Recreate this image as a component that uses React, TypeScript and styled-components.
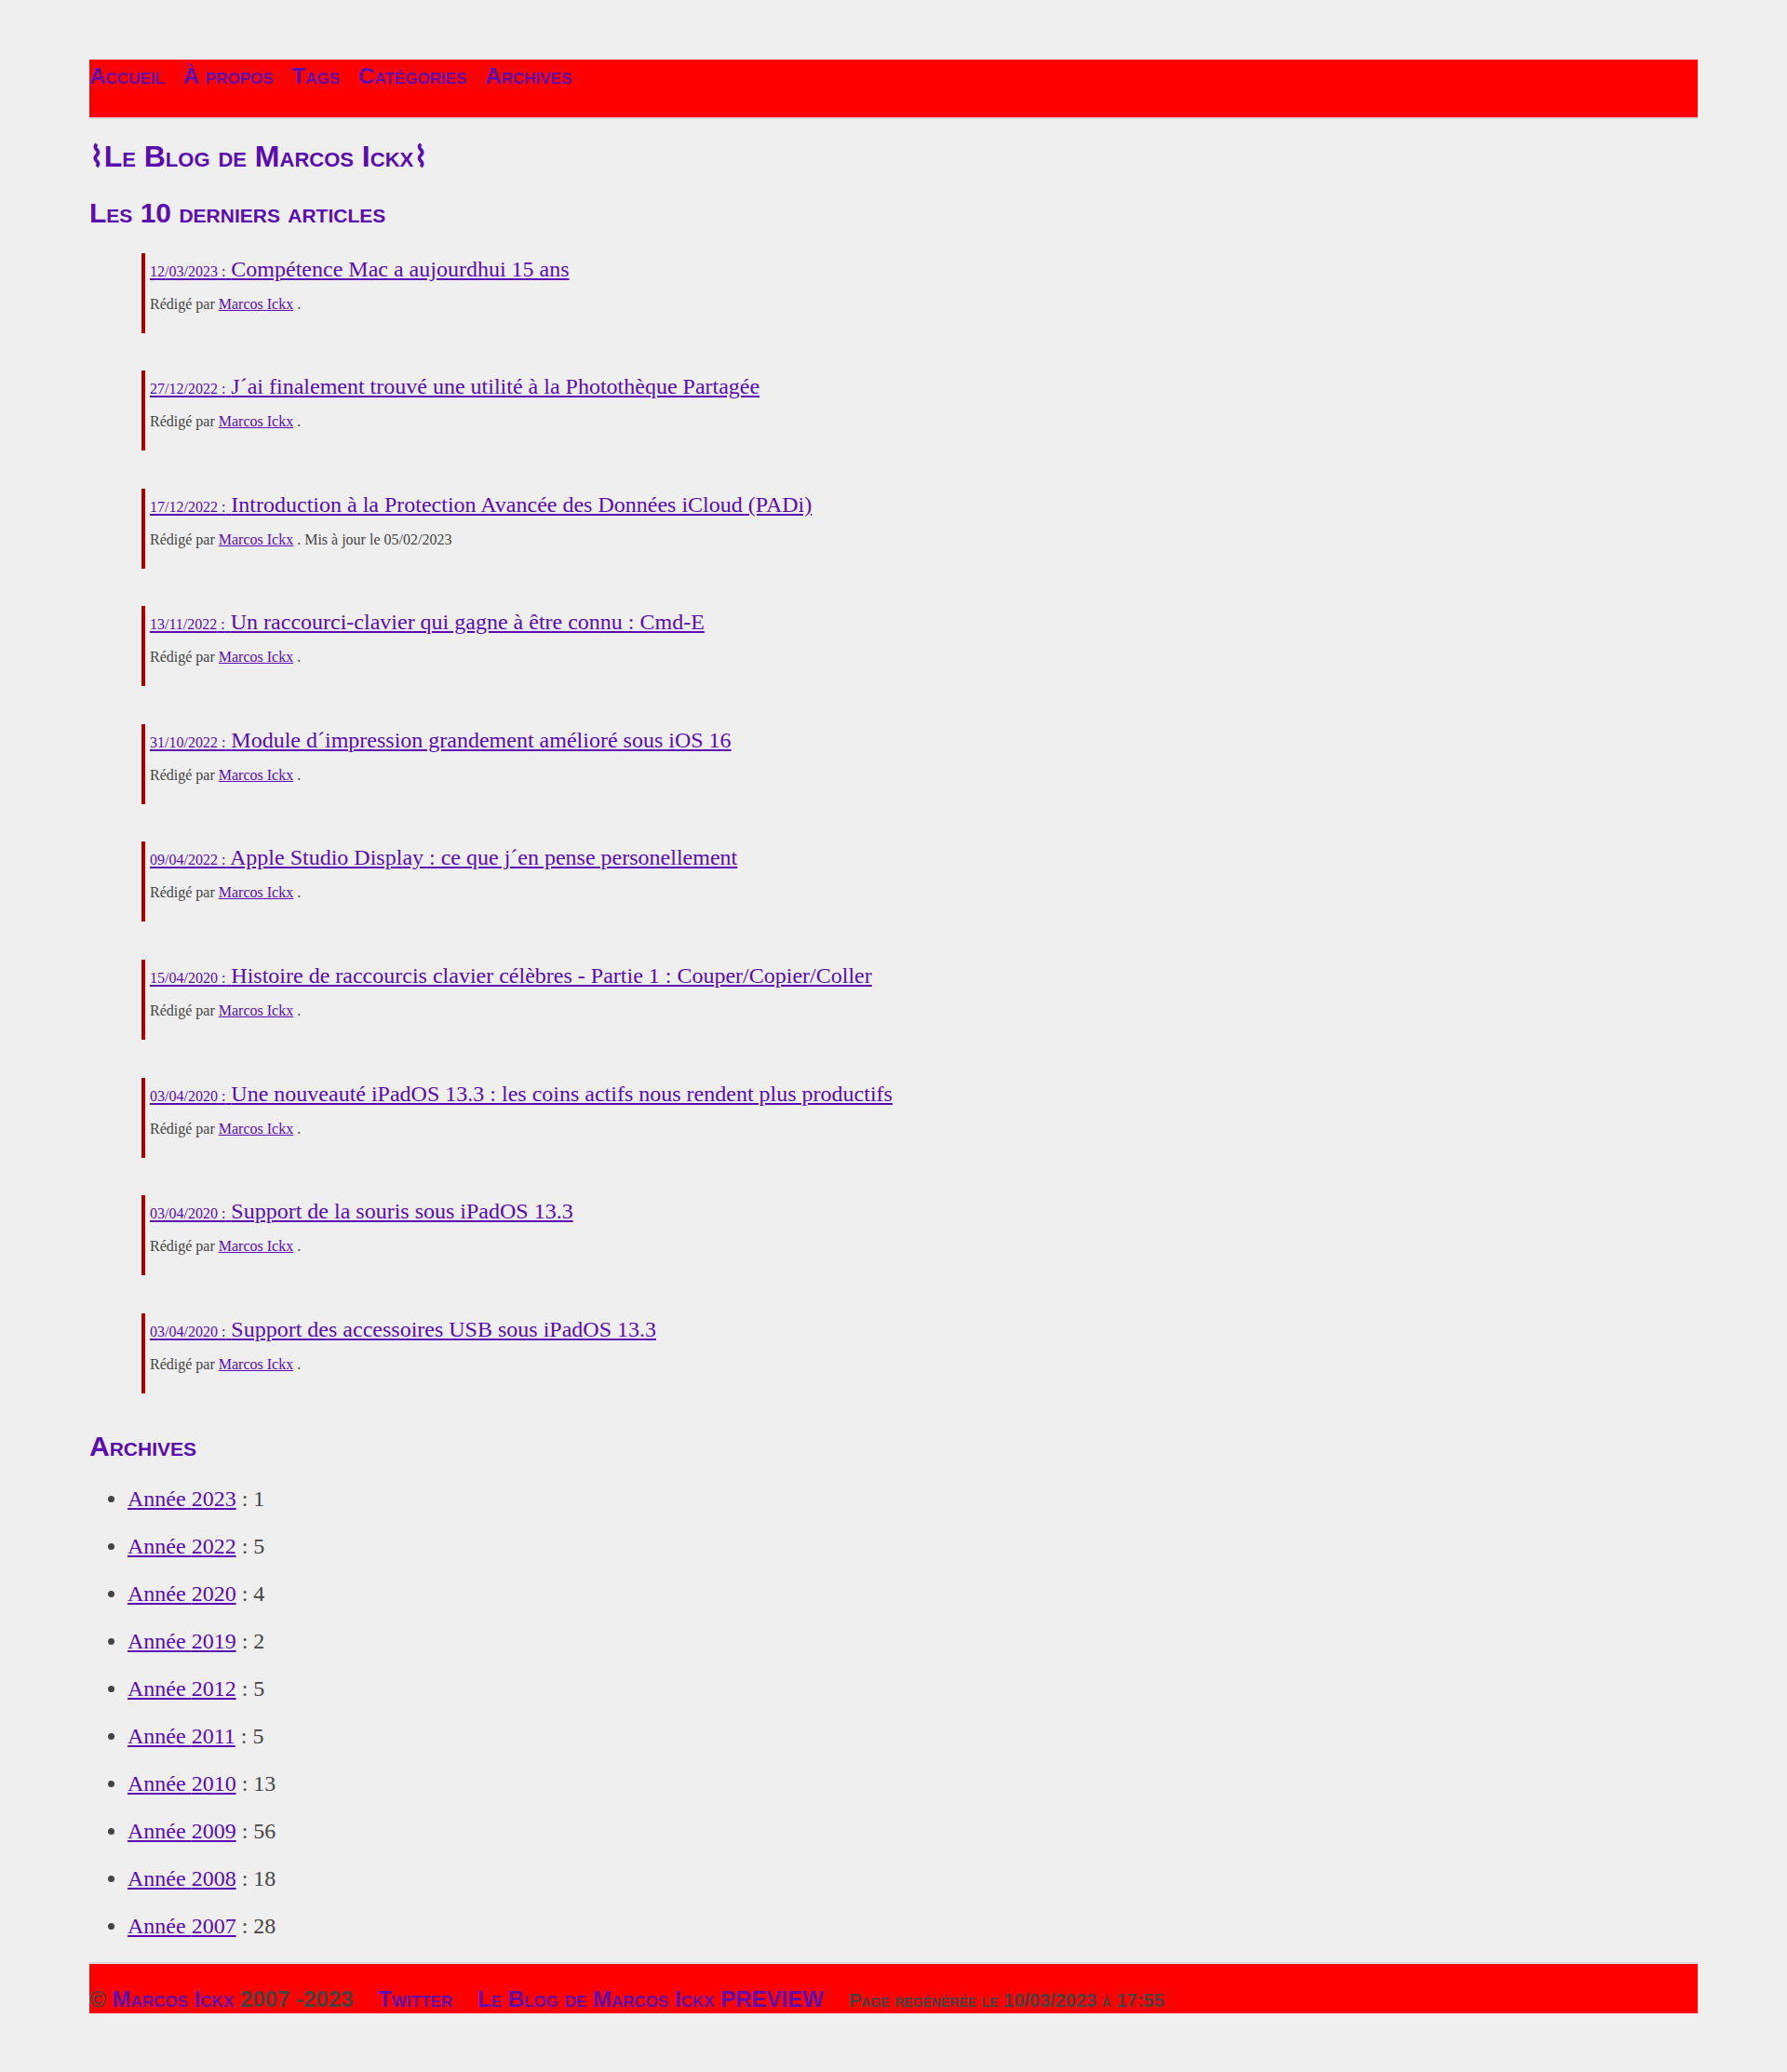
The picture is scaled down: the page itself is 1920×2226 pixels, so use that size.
import React from 'react';
import styled, { createGlobalStyle } from 'styled-components';

const purple = '#5a0cb2';
const grey = '#444444';

const GlobalStyle = createGlobalStyle`
  body {
    margin: 0;
    background: #efefef;
    color: ${grey};
    font-family: "Liberation Serif", "Times New Roman", serif;
  }
`;

const Page = styled.div`
  width: 90%;
  margin: 0 auto;
  padding: 64px 0;
`;

const Nav = styled.nav`
  background: #ff0000;
  border-bottom: 2px solid #d9d9d9;
  height: 58px;
  padding-top: 4px;
`;

const NavList = styled.div`
  display: flex;
  gap: 20px;
`;

const NavLink = styled.a`
  font-family: "Liberation Sans", Arial, sans-serif;
  font-size: 24px;
  font-weight: 700;
  font-variant: small-caps;
  color: ${purple};
  text-decoration: none;
`;

const SiteTitle = styled.h1`
  margin: 20.5px 0 0;
  font-family: "Liberation Sans", "DejaVu Sans", Arial, sans-serif;
  font-size: 32px;
  font-weight: 700;
  font-variant: small-caps;

  a {
    color: ${purple};
    text-decoration: none;
  }
`;

const Heading = styled.h2<{ $top: number }>`
  margin: ${(p) => p.$top}px 0 0;
  font-family: "Liberation Sans", Arial, sans-serif;
  font-size: 30px;
  font-weight: 700;
  font-variant: small-caps;
  color: ${purple};
`;

const ArticleList = styled.div`
  display: flex;
  flex-direction: column;
  gap: 40.6px;
  margin: 25.5px 0 0 56px;
`;

const Entry = styled.article`
  border-left: 4px solid #aa0000;
  padding: 4px 0 22px 5px;
`;

const EntryTitle = styled.a`
  color: ${purple};
  font-size: 24px;
`;

const EntryDate = styled.span`
  font-size: 16px;
`;

const Meta = styled.p`
  margin: 15px 0 0;
  font-size: 16px;
  color: ${grey};

  a {
    color: ${purple};
  }
`;

const ArchiveList = styled.ul`
  display: flex;
  flex-direction: column;
  gap: 24px;
  margin: 26px 0 0;
  padding-left: 41px;
`;

const ArchiveItem = styled.li`
  font-size: 24px;
  color: ${grey};

  a {
    color: ${purple};
  }
`;

const Footer = styled.footer`
  display: flex;
  align-items: baseline;
  gap: 27px;
  margin-top: 25px;
  border-top: 2px solid #d9d9d9;
  background: #ff0000;
  padding: 24px 0 1px;
  font-family: "Liberation Sans", Arial, sans-serif;
  font-weight: 700;
  font-variant: small-caps;
  color: ${grey};
`;

const FooterItem = styled.span<{ $small?: boolean }>`
  font-size: ${(p) => (p.$small ? 20 : 24)}px;

  a {
    color: ${purple};
    text-decoration: none;
  }
`;

const articles = [
  { date: '12/03/2023', title: 'Compétence Mac a aujourdhui 15 ans' },
  { date: '27/12/2022', title: 'J´ai finalement trouvé une utilité à la Photothèque Partagée' },
  {
    date: '17/12/2022',
    title: 'Introduction à la Protection Avancée des Données iCloud (PADi)',
    updated: '05/02/2023',
  },
  { date: '13/11/2022', title: 'Un raccourci-clavier qui gagne à être connu : Cmd-E' },
  { date: '31/10/2022', title: 'Module d´impression grandement amélioré sous iOS 16' },
  { date: '09/04/2022', title: 'Apple Studio Display : ce que j´en pense personellement' },
  { date: '15/04/2020', title: 'Histoire de raccourcis clavier célèbres - Partie 1 : Couper/Copier/Coller' },
  { date: '03/04/2020', title: 'Une nouveauté iPadOS 13.3 : les coins actifs nous rendent plus productifs' },
  { date: '03/04/2020', title: 'Support de la souris sous iPadOS 13.3' },
  { date: '03/04/2020', title: 'Support des accessoires USB sous iPadOS 13.3' },
];

const years = [
  ['2023', 1],
  ['2022', 5],
  ['2020', 4],
  ['2019', 2],
  ['2012', 5],
  ['2011', 5],
  ['2010', 13],
  ['2009', 56],
  ['2008', 18],
  ['2007', 28],
];

export default function App() {
  return (
    <Page>
      <GlobalStyle />
      <Nav>
        <NavList>
          <NavLink href="#">Accueil</NavLink>
          <NavLink href="#">À propos</NavLink>
          <NavLink href="#">Tags</NavLink>
          <NavLink href="#">Catégories</NavLink>
          <NavLink href="#">Archives</NavLink>
        </NavList>
      </Nav>

      <SiteTitle>
        <a href="#">⌇Le Blog de Marcos Ickx⌇</a>
      </SiteTitle>

      <Heading $top={25.5}>Les 10 derniers articles</Heading>
      <ArticleList>
        {articles.map((a, i) => (
          <Entry key={i}>
            <EntryTitle href="#">
              <EntryDate>{a.date} :</EntryDate> {a.title}
            </EntryTitle>
            <Meta>
              Rédigé par <a href="#">Marcos Ickx</a> .
              {a.updated && ` Mis à jour le ${a.updated}`}
            </Meta>
          </Entry>
        ))}
      </ArticleList>

      <Heading $top={40}>Archives</Heading>
      <ArchiveList>
        {years.map(([y, n]) => (
          <ArchiveItem key={y}>
            <a href="#">Année {y}</a> : {n}
          </ArchiveItem>
        ))}
      </ArchiveList>

      <Footer>
        <FooterItem>
          © <a href="#">Marcos Ickx</a> 2007 -2023
        </FooterItem>
        <FooterItem>
          <a href="#">Twitter</a>
        </FooterItem>
        <FooterItem>
          <a href="#">Le Blog de Marcos Ickx PREVIEW</a>
        </FooterItem>
        <FooterItem $small>Page regénérée le 10/03/2023 à 17:55</FooterItem>
      </Footer>
    </Page>
  );
}
